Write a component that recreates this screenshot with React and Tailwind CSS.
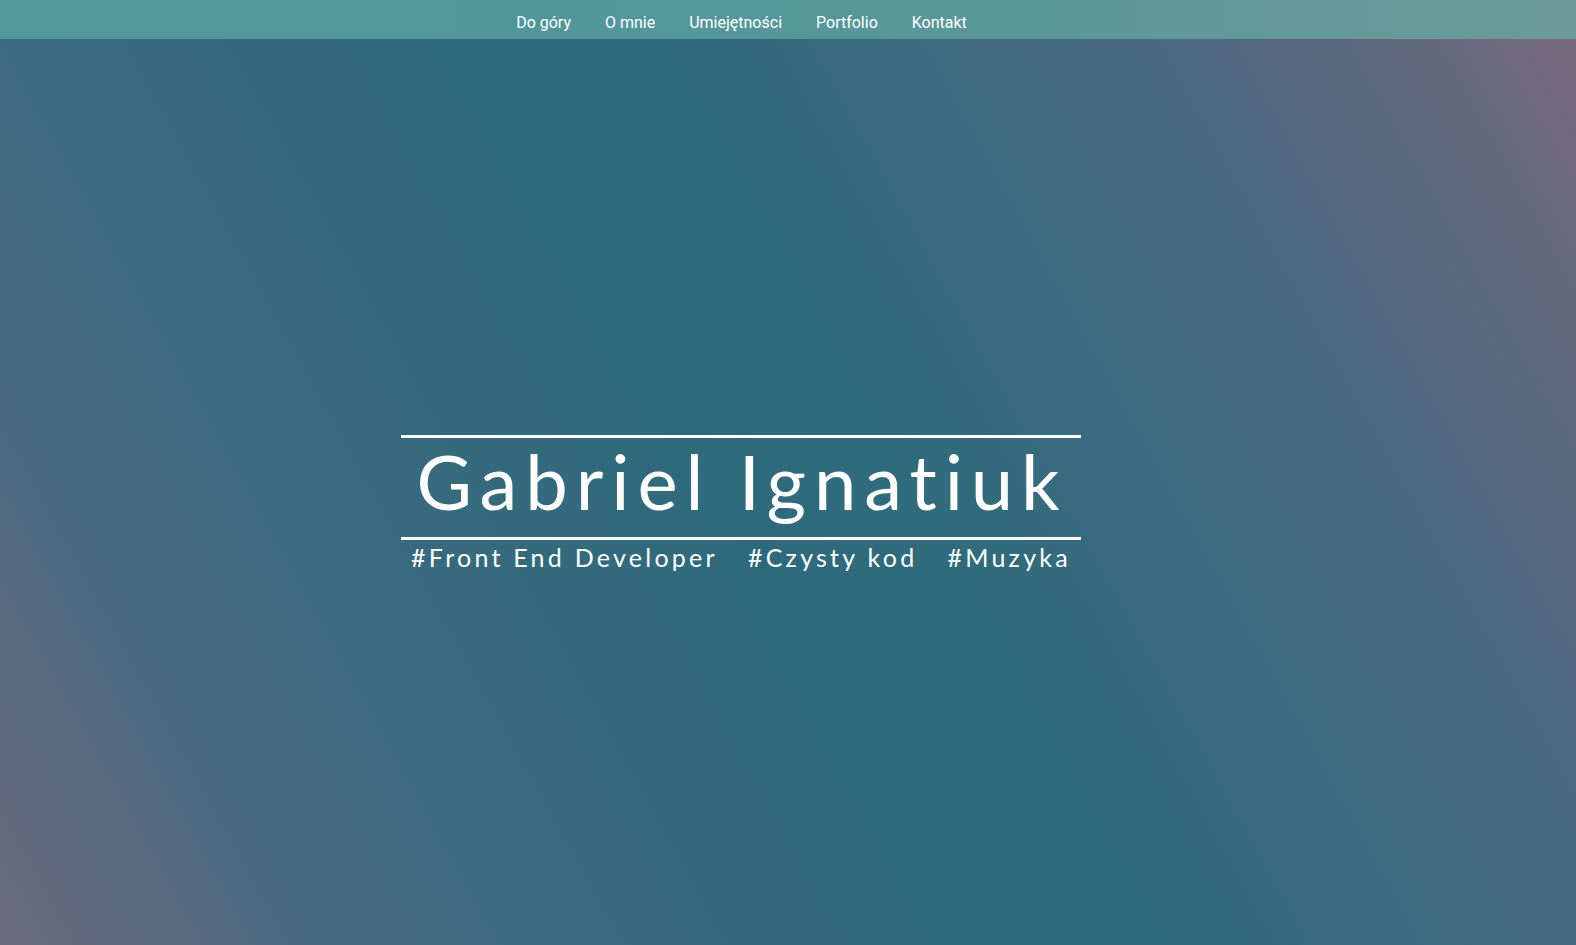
const navItems = ['Do góry', 'O mnie', 'Umiejętności', 'Portfolio', 'Kontakt'];
const tags = ['#Front End Developer', '#Czysty kod', '#Muzyka'];

const App = () => {
  return (
    <div className="h-screen w-full flex flex-col overflow-hidden bg-[linear-gradient(61deg,#6c6a80_0%,#4b6a80_14%,#3a6a7e_27%,#2f6a7c_46%,#316b7c_58%,#4a6a80_78%,#5a687f_88%,#7b6a7e_100%)]">
      <nav className="h-[39px] shrink-0 flex items-center justify-center pr-[93px] bg-[linear-gradient(90deg,#52979b_0%,#51969b_35%,#5a9799_65%,#6c9a98_100%)]">
        <ul className="flex items-center gap-[34px] pt-[10px] pb-[4px]">
          {navItems.map(item => (
            <li key={item} className="text-white text-[16px] leading-none font-['Roboto',sans-serif]">{item}</li>
          ))}
        </ul>
      </nav>

      <main className="flex-1 flex justify-center pr-[94px] pt-[396px]">
        <div className="w-[680px] flex flex-col items-center text-white font-['Lato',sans-serif]">
          <div className="h-[3px] w-full bg-white" />
          <h1 className="mt-[5px] text-[76px] leading-none font-normal tracking-[0.104em] pl-[2px]">Gabriel Ignatiuk</h1>
          <div className="mt-[18px] h-[3px] w-full bg-white" />
          <div className="mt-[2px] flex gap-[30px] text-[25px] leading-tight tracking-[0.13em]">
            {tags.map(t => <span key={t}>{t}</span>)}
          </div>
        </div>
      </main>
    </div>
  );
};

export default App;
